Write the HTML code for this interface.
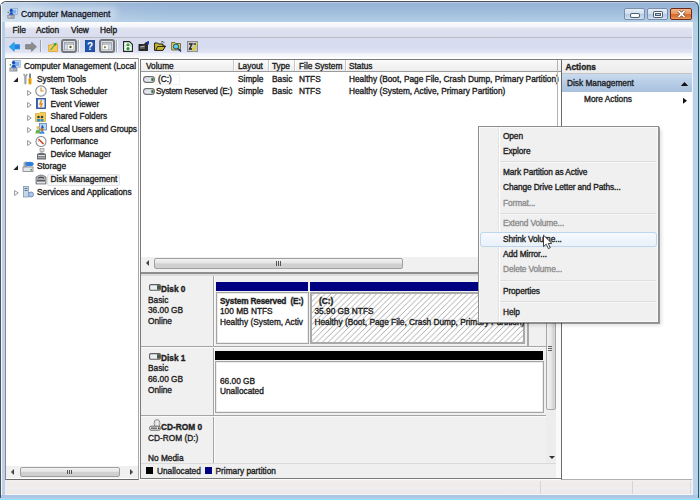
<!DOCTYPE html>
<html><head><meta charset="utf-8">
<style>
*{box-sizing:border-box;margin:0;padding:0}
html,body{width:700px;height:500px;overflow:hidden;background:#fff;font-family:"Liberation Sans",sans-serif;font-size:8.3px;color:#1e1e1e}
.a{position:absolute}
.t{position:absolute;white-space:nowrap;line-height:12px;-webkit-text-stroke:0.35px currentColor;letter-spacing:0}
#ctx .t{letter-spacing:-0.1px}
.b{font-weight:bold}
.g{color:#8d8d8d}
.ic{position:absolute;width:12px;height:12px}
</style></head><body>
<!-- window frame -->
<div class="a" style="left:0;top:1px;width:699px;height:499px;border:1px solid #4c5058;border-bottom:none;border-radius:6px 6px 0 0;background:linear-gradient(180deg,#94b2d6 0,#a2bedd 10px,#b4cfe6 21px,#bcd2ea 60px,#bcd2ea 100%)"></div>
<div class="a" style="left:1px;top:2px;width:697px;height:20px;border-radius:5px 5px 0 0;background:linear-gradient(90deg,rgba(255,255,255,0.45),rgba(255,255,255,0.12) 60px,rgba(255,255,255,0) 170px)"></div>
<div class="a" style="left:18px;top:6px;width:100px;height:14px;border-radius:7px;background:rgba(255,255,255,0.3);filter:blur(3px)"></div>
<div class="a" style="left:1px;top:4px;width:1px;height:494px;background:#f2f6fb"></div>
<div class="a" style="left:4px;top:2px;width:691px;height:1px;background:rgba(255,255,255,0.35)"></div>
<div class="a" style="left:1px;top:495px;width:697px;height:3px;background:#aac8e6"></div>
<div class="a" style="left:0;top:498px;width:699px;height:1px;background:#c6c8ee"></div>
<div class="a" style="left:699px;top:0;width:1px;height:500px;background:#8fe6f0"></div>
<div class="a" style="left:0;top:499px;width:700px;height:1px;background:#80e8f8"></div>

<!-- title -->
<svg class="a" style="left:7px;top:8px" width="11" height="11" viewBox="0 0 12 12"><rect x="4" y="0.6" width="7.2" height="6.6" fill="#d6e6f8" stroke="#8eaed2" stroke-width="0.9"/><rect x="5.2" y="1.8" width="4.8" height="4.2" fill="#7fb2ea"/><circle cx="4.6" cy="2.6" r="1.7" fill="#1a48b8"/><path d="M2.2 8.2 Q2.6 4.6 4.6 4.4 Q6.8 4.6 7.2 8.2 Z" fill="#2058c8"/><circle cx="1.4" cy="4.8" r="0.9" fill="#5a9a4a"/><rect x="0.4" y="7.4" width="8" height="4.2" rx="0.6" fill="#8a9098"/><rect x="1.4" y="8.4" width="3" height="2.2" fill="#c4c8ce"/><rect x="5" y="8.4" width="2.4" height="2.2" fill="#b0b4ba"/></svg>
<div class="t" style="left:21px;top:8px;font-size:8.5px;color:#141428;-webkit-text-stroke:0.3px #141428">Computer Management</div>
<!-- caption buttons -->
<div class="a" style="left:624px;top:8px;width:21px;height:12px;border:1px solid #7d8ea8;border-radius:2px;background:linear-gradient(#e6eef8,#d2e0f0 45%,#b4cbe5 50%,#c0d5ec 80%,#d6e6f6)"></div>
<div class="a" style="left:631px;top:14px;width:8px;height:3px;background:#fff;box-shadow:0 0 0 1px #4e5d72;border-radius:1px"></div>
<div class="a" style="left:647px;top:8px;width:21px;height:12px;border:1px solid #7d8ea8;border-radius:2px;background:linear-gradient(#e6eef8,#d2e0f0 45%,#b4cbe5 50%,#c0d5ec 80%,#d6e6f6)"></div>
<div class="a" style="left:654px;top:12px;width:8px;height:5px;border:1.5px solid #fff;box-shadow:0 0 0 1px #4e5d72,inset 0 0 0 1px #4e5d72;border-radius:1px"></div>
<div class="a" style="left:670px;top:8px;width:22px;height:12px;border:1px solid #6e2a18;border-radius:2px;background:linear-gradient(#f4b68a,#e99a60 45%,#d8682c 50%,#de7a3a 80%,#eea060)"></div>
<svg class="a" style="left:677px;top:10px" width="9" height="8" viewBox="0 0 9 8"><path d="M1.5 1 L7.5 7 M7.5 1 L1.5 7" stroke="#5a2a1a" stroke-width="3"/><path d="M1.5 1 L7.5 7 M7.5 1 L1.5 7" stroke="#fff" stroke-width="1.8"/></svg>
<!-- menu bar -->
<div class="a" style="left:5px;top:22px;width:687px;height:15px;background:linear-gradient(#fbfcfe,#f3f5fa 30%,#dee2f0 45%,#d9ddee)"></div>
<div class="a" style="left:5px;top:37px;width:687px;height:1px;background:#b6bec2"></div>
<div class="t" style="left:12.5px;top:23.5px">File</div>
<div class="t" style="left:36px;top:23.5px">Action</div>
<div class="t" style="left:71px;top:23.5px">View</div>
<div class="t" style="left:100px;top:23.5px">Help</div>

<!-- toolbar -->
<div class="a" style="left:5px;top:38px;width:687px;height:15px;background:linear-gradient(#d8dcee,#d6dcf0 60%,#e2e6f4)"></div>
<div class="a" style="left:5px;top:53px;width:687px;height:5px;background:linear-gradient(#eef1f8,#fafbfd)"></div>
<div id="tb">
<svg class="a" style="left:9px;top:42px" width="11" height="10" viewBox="0 0 11 10"><path d="M0.3 4.8 L5.2 0.3 L5.2 2.6 L10.7 2.6 L10.7 7 L5.2 7 L5.2 9.4 Z" fill="#2aa6ee" stroke="#1b86d6" stroke-width="0.6"/><rect x="6" y="3" width="4.5" height="3.6" fill="#2a7ee0"/></svg>
<svg class="a" style="left:25px;top:42px" width="12" height="10" viewBox="0 0 12 10"><path d="M11.5 4.8 L6.6 0.3 L6.6 2.6 L0.6 2.6 L0.6 7 L6.6 7 L6.6 9.4 Z" fill="#8c8c8c" stroke="#707070" stroke-width="0.6"/></svg>
<div class="a" style="left:40px;top:40px;width:1px;height:12px;background:#9a9ea6"></div><div class="a" style="left:41px;top:40px;width:1px;height:12px;background:#eef0f6"></div>
<div class="a" style="left:78px;top:40px;width:1px;height:12px;background:#a6abb5"></div><div class="a" style="left:79px;top:40px;width:1px;height:12px;background:#f4f6fa"></div>
<div class="a" style="left:116px;top:40px;width:1px;height:12px;background:#a6abb5"></div><div class="a" style="left:117px;top:40px;width:1px;height:12px;background:#f4f6fa"></div>
<svg class="a" style="left:48px;top:42px" width="10" height="10" viewBox="0 0 10 10"><path d="M0.5 3 L3.5 3 L4.5 2 L9.5 2 L9.5 9.5 L0.5 9.5 Z" fill="#f5c95a" stroke="#d9a23a" stroke-width="0.8"/><path d="M2 8 L6.5 2.5 L5 2 L8.5 0.5 L8 4 L7 3.3 L3 8.3 Z" fill="#3f9a3f"/></svg>
<div class="a" style="left:61px;top:39px;width:16px;height:14px;border:2px solid #75787e;border-radius:3px;background:linear-gradient(#e0e1e4,#d0d2d6)"></div>
<div class="a" style="left:99px;top:39px;width:16px;height:14px;border:2px solid #75787e;border-radius:3px;background:linear-gradient(#e0e1e4,#d0d2d6)"></div>
<svg class="a" style="left:64px;top:42px" width="10" height="8" viewBox="0 0 10 8"><rect x="0.5" y="0.5" width="9" height="7" fill="#bfc3c9" stroke="#9aa0a8" stroke-width="0.8"/><rect x="4" y="3" width="5.5" height="4.5" fill="#fbfbf3"/><circle cx="6.5" cy="5" r="1.2" fill="#5a5a2a"/><rect x="1" y="3" width="2" height="4.5" fill="#cfe0f4"/></svg>
<svg class="a" style="left:102px;top:42px" width="10" height="8" viewBox="0 0 10 8"><rect x="0.5" y="0.5" width="9" height="7" fill="#bfc3c9" stroke="#9aa0a8" stroke-width="0.8"/><rect x="0.5" y="3" width="5.5" height="4.5" fill="#fbfbf3"/><path d="M2.3 3.8 L4.3 5.2 L2.3 6.6 Z" fill="#5a5a2a"/><rect x="7" y="3" width="2" height="4.5" fill="#cfe0f4"/></svg>
<svg class="a" style="left:85px;top:40px" width="10" height="12" viewBox="0 0 10 12"><rect x="0.4" y="0.4" width="9.2" height="11.2" fill="#1f55b0" stroke="#163f8a" stroke-width="0.8"/><text x="5" y="9.6" font-family="Liberation Sans" font-weight="bold" font-size="10" fill="#fff" text-anchor="middle">?</text></svg>
<svg class="a" style="left:123px;top:41px" width="10" height="11" viewBox="0 0 10 11"><path d="M0.6 0.6 L6.5 0.6 L9.4 3.5 L9.4 10.4 L0.6 10.4 Z" fill="#fff" stroke="#222" stroke-width="1.1"/><circle cx="5" cy="3.7" r="1.5" fill="#1e9a2a"/><circle cx="5" cy="7.6" r="1.6" fill="#1e9a2a"/><path d="M2.6 5.6 A2.4 2.4 0 0 1 7.4 5.6" stroke="#6cc06c" stroke-width="0.7" fill="none"/></svg>
<svg class="a" style="left:138px;top:41px" width="11" height="11" viewBox="0 0 11 11"><path d="M0.5 3 L6 3 L8 1 L10 1 L10 10 L0.5 10 Z" fill="#2a2a2a"/><rect x="2" y="5" width="5" height="3" fill="#5a5a5a"/><path d="M2.5 6 L6.5 5" stroke="#ddd" stroke-width="0.8"/><rect x="9.3" y="0" width="1.7" height="3.5" fill="#1a3fd0"/></svg>
<svg class="a" style="left:154px;top:41px" width="12" height="10" viewBox="0 0 12 10"><path d="M0.6 2 L3.5 2 L4.5 3 L9 3 L9 5 L11.5 5 L9 9.4 L0.6 9.4 Z" fill="#c8b832" stroke="#1e1e10" stroke-width="1"/><path d="M2 9 L3.5 5.5 L11 5.5" stroke="#1e1e10" stroke-width="0.9" fill="none"/><path d="M7 1 L9 0.5 L10.5 2" stroke="#333" stroke-width="0.8" fill="none"/></svg>
<svg class="a" style="left:171px;top:41px" width="11" height="11" viewBox="0 0 11 11"><path d="M0.6 1.5 L4 1.5 L5 2.5 L9.5 2.5 L9.5 9 L0.6 9 Z" fill="#d6cf5a" stroke="#6a6a30" stroke-width="0.9"/><circle cx="5" cy="5.5" r="2.6" fill="#5ad2ea" stroke="#24406a" stroke-width="1"/><path d="M7 7.5 L10 10.5" stroke="#1a2a7a" stroke-width="1.4"/></svg>
<svg class="a" style="left:187px;top:41px" width="11" height="11" viewBox="0 0 11 11"><rect x="0.5" y="0.5" width="10" height="10" fill="#c8c8c8" stroke="#7c7c7c" stroke-width="0.8"/><path d="M2 3 L5 3 L2.5 8 L5 8" stroke="#222" stroke-width="1.3" fill="none"/><path d="M5.5 6.5 L7 9.5 L10 2" stroke="#d8d030" stroke-width="1.6" fill="none"/><path d="M6.5 3 L9 3" stroke="#222" stroke-width="1.2"/></svg>
</div>

<!-- panels -->
<div class="a" style="left:5px;top:57px;width:687px;height:423px;background:#fdfdfe"></div>
<div id="left" class="a" style="left:5px;top:58px;width:134px;height:422px;border:1px solid #8a8a8a;border-right-color:#a8a8a8;border-bottom-color:#6a6a6a;background:#fff;overflow:hidden">
<div class="a" style="left:0px;top:407px;width:132px;height:12px;background:#f0f0f0"></div>
<div class="a" style="left:5px;top:410px;width:0;height:0;border-top:3px solid transparent;border-bottom:3px solid transparent;border-right:3px solid #404040"></div>
<div class="a" style="left:14px;top:408px;width:100px;height:10px;border:1px solid #a0a0a0;border-radius:2px;background:linear-gradient(#f3f3f3,#e4e4e4 45%,#d0d0d0 55%,#cfcfcf)"></div>
<div class="a" style="left:61px;top:411px;width:5px;height:4px;background:repeating-linear-gradient(90deg,#555 0 1px,transparent 1px 2px)"></div>
<div class="a" style="left:124px;top:410px;width:0;height:0;border-top:3px solid transparent;border-bottom:3px solid transparent;border-left:3px solid #404040"></div>
<div class="t" style="left:18px;top:1px">Computer Management (Local</div>
<div class="t" style="left:31px;top:14px">System Tools</div>
<div class="t" style="left:44.5px;top:26px">Task Scheduler</div>
<div class="t" style="left:44.5px;top:39px">Event Viewer</div>
<div class="t" style="left:44.5px;top:51px">Shared Folders</div>
<div class="t" style="left:44.5px;top:64px;letter-spacing:-0.15px">Local Users and Groups</div>
<div class="t" style="left:44.5px;top:76px">Performance</div>
<div class="t" style="left:44.5px;top:89px">Device Manager</div>
<div class="t" style="left:31px;top:101px">Storage</div>
<div class="a" style="left:41px;top:115px;width:73px;height:12px;border:1px solid #e2e2e2;border-radius:2px;background:#f8f8f8"></div>
<div class="t" style="left:44.5px;top:114px">Disk Management</div>
<div class="t" style="left:31px;top:127px">Services and Applications</div>
</div>
<div id="treeicons">
<svg class="a" style="left:13px;top:77px" width="6" height="6" viewBox="0 0 6 6"><path d="M5 0.3 L5 5 L0.3 5 Z" fill="#222"/></svg>
<svg class="a" style="left:27px;top:90px" width="5" height="6" viewBox="0 0 5 6"><path d="M0.6 0.5 L4.2 3 L0.6 5.5 Z" fill="#fff" stroke="#8c8c8c" stroke-width="0.9"/></svg>
<svg class="a" style="left:27px;top:102px" width="5" height="6" viewBox="0 0 5 6"><path d="M0.6 0.5 L4.2 3 L0.6 5.5 Z" fill="#fff" stroke="#8c8c8c" stroke-width="0.9"/></svg>
<svg class="a" style="left:27px;top:115px" width="5" height="6" viewBox="0 0 5 6"><path d="M0.6 0.5 L4.2 3 L0.6 5.5 Z" fill="#fff" stroke="#8c8c8c" stroke-width="0.9"/></svg>
<svg class="a" style="left:27px;top:127px" width="5" height="6" viewBox="0 0 5 6"><path d="M0.6 0.5 L4.2 3 L0.6 5.5 Z" fill="#fff" stroke="#8c8c8c" stroke-width="0.9"/></svg>
<svg class="a" style="left:27px;top:140px" width="5" height="6" viewBox="0 0 5 6"><path d="M0.6 0.5 L4.2 3 L0.6 5.5 Z" fill="#fff" stroke="#8c8c8c" stroke-width="0.9"/></svg>
<svg class="a" style="left:13px;top:165px" width="6" height="6" viewBox="0 0 6 6"><path d="M5 0.3 L5 5 L0.3 5 Z" fill="#222"/></svg>
<svg class="a" style="left:14px;top:190px" width="5" height="6" viewBox="0 0 5 6"><path d="M0.6 0.5 L4.2 3 L0.6 5.5 Z" fill="#fff" stroke="#8c8c8c" stroke-width="0.9"/></svg>
<svg class="a" style="left:9px;top:60px" width="12" height="12" viewBox="0 0 12 12"><rect x="4" y="0.6" width="7.2" height="6.6" fill="#d6e6f8" stroke="#8eaed2" stroke-width="0.9"/><rect x="5.2" y="1.8" width="4.8" height="4.2" fill="#7fb2ea"/><circle cx="4.6" cy="2.6" r="1.7" fill="#1a48b8"/><path d="M2.2 8.2 Q2.6 4.6 4.6 4.4 Q6.8 4.6 7.2 8.2 Z" fill="#2058c8"/><circle cx="1.4" cy="4.8" r="0.9" fill="#5a9a4a"/><rect x="0.4" y="7.4" width="8" height="4.2" rx="0.6" fill="#8a9098"/><rect x="1.4" y="8.4" width="3" height="2.2" fill="#c4c8ce"/><rect x="5" y="8.4" width="2.4" height="2.2" fill="#b0b4ba"/></svg>
<svg class="a" style="left:23px;top:73px" width="10" height="12" viewBox="0 0 10 12"><path d="M1 0.8 Q0.4 2.5 1.6 3.6 L1.8 10.8 Q2.4 11.6 3 10.8 L3.2 3.6 Q4.4 2.5 3.8 0.8 L3.2 2.4 L1.6 2.4 Z" fill="#b4b9c0" stroke="#7d838b" stroke-width="0.6"/><rect x="6.3" y="0.6" width="1.4" height="4.6" fill="#4a5058"/><rect x="5.4" y="5" width="3.2" height="6.4" rx="0.8" fill="#f0b418"/><rect x="6.2" y="6" width="1.2" height="4.5" fill="#d08a10"/></svg>
<svg class="a" style="left:35px;top:85px" width="12" height="12" viewBox="0 0 12 12"><circle cx="6" cy="6" r="5.2" fill="#fdfdfd" stroke="#8a8f96" stroke-width="1.2"/><path d="M6 2.5 L6 6 L8.8 6" stroke="#e0901a" stroke-width="1.1" fill="none"/></svg>
<svg class="a" style="left:36px;top:98px" width="10" height="11" viewBox="0 0 10 11"><rect x="0.5" y="0.5" width="9" height="10" fill="#3d68b8" stroke="#24478a" stroke-width="0.8"/><rect x="2" y="1.5" width="6.5" height="8" fill="#e9eef8"/><path d="M5.5 2 L4 6 L6 6 L4.5 9.5" stroke="#e58a10" stroke-width="1.4" fill="none"/></svg>
<svg class="a" style="left:35px;top:112px" width="11" height="10" viewBox="0 0 11 10"><path d="M0.5 1.5 L4 1.5 L5 0.5 L10.5 0.5 L10.5 9.5 L0.5 9.5 Z" fill="#f4cc5c" stroke="#d8a83a" stroke-width="0.8"/><circle cx="3.5" cy="5" r="1.3" fill="#3a3a3a"/><circle cx="7" cy="5" r="1.3" fill="#3a3a3a"/><rect x="2" y="7" width="3" height="2.5" fill="#2f8fd0"/><rect x="5.5" y="7" width="3" height="2.5" fill="#2f8fd0"/></svg>
<svg class="a" style="left:35px;top:123px" width="12" height="11" viewBox="0 0 12 11"><rect x="4.5" y="0.5" width="7" height="6.5" fill="#b8d4f2" stroke="#5a82b8" stroke-width="0.8"/><path d="M6 6 L7 1.5 L9 5 Z" fill="#1b4ea8"/><circle cx="3" cy="4.5" r="1.6" fill="#e8c060"/><path d="M0.5 10.5 Q0.5 6.5 3 6.5 Q5.5 6.5 5.5 10.5 Z" fill="#6ab04c"/><circle cx="7" cy="6.5" r="1.6" fill="#c07020"/><path d="M4.5 10.8 Q5 8 7 8 Q9.5 8 9.5 10.8 Z" fill="#3a8ad8"/></svg>
<svg class="a" style="left:35px;top:136px" width="12" height="11" viewBox="0 0 12 11"><circle cx="6" cy="5.5" r="5" fill="#fff" stroke="#8a8f96" stroke-width="1.1"/><path d="M3.5 3 L8.5 8" stroke="#c83a1a" stroke-width="1.5"/><path d="M3.2 6 L4 3.5" stroke="#d8a070" stroke-width="0.8"/></svg>
<svg class="a" style="left:36px;top:148px" width="11" height="12" viewBox="0 0 11 12"><rect x="4" y="0.5" width="4" height="3" fill="#d8d8d8" stroke="#9a9a9a" stroke-width="0.7"/><path d="M1 6 Q5.5 3 10 6 L10 11.5 L1 11.5 Z" fill="#6a6d72"/><rect x="2" y="7" width="7" height="1.2" fill="#e0e0e0"/><rect x="2" y="9.2" width="7" height="1" fill="#b8b8b8"/></svg>
<svg class="a" style="left:22px;top:161px" width="12" height="11" viewBox="0 0 12 11"><path d="M1.5 2 Q1.5 0.5 4 0.5 L5 0.5 L5 6 L1.5 6 Z" fill="#a8abb0"/><ellipse cx="7.5" cy="3" rx="4.2" ry="2.3" fill="#2f7fd8"/><rect x="1" y="6" width="10" height="4.5" fill="#e4e6ea" stroke="#7d8087" stroke-width="0.8"/><rect x="8.5" y="8" width="1.5" height="1.5" fill="#3a9a3a"/></svg>
<svg class="a" style="left:35px;top:173px" width="12" height="12" viewBox="0 0 12 12"><path d="M1 4 Q6 0 11 4 L11 11 L1 11 Z" fill="#a9acb1" stroke="#6e7177" stroke-width="0.8"/><path d="M3 5 Q6 3.5 9 5" stroke="#3a3a3a" stroke-width="1" fill="none"/><rect x="2" y="7" width="8" height="1.2" fill="#5a5d62"/><rect x="2" y="9" width="8" height="1.2" fill="#e4e4e4"/></svg>
<svg class="a" style="left:23px;top:186px" width="11" height="12" viewBox="0 0 11 12"><rect x="0.5" y="0.5" width="5" height="10.5" fill="#c7d7e8" stroke="#8098b4" stroke-width="0.8"/><rect x="1.5" y="2" width="3" height="1" fill="#60788f"/><rect x="1.5" y="4" width="3" height="1" fill="#60788f"/><circle cx="8" cy="8.5" r="2.5" fill="#a9c8ec" stroke="#6c8cb8" stroke-width="0.9"/></svg>
</div>
<div id="mid" class="a" style="left:140px;top:59px;width:421px;height:420px;border:1px solid #7a7a7a;border-right:none;background:#fff;overflow:hidden">
<div class="a" style="left:0px;top:0px;width:420px;height:12px;background:linear-gradient(#fbfbfb,#f3f3f3 50%,#ececec)"></div>
<div class="a" style="left:0px;top:11px;width:420px;height:1px;background:#9a9a9a"></div>
<div class="a" style="left:92px;top:0px;width:1px;height:11px;background:#c9c9c9"></div>
<div class="a" style="left:93px;top:0px;width:1px;height:11px;background:#fff"></div>
<div class="a" style="left:127px;top:0px;width:1px;height:11px;background:#c9c9c9"></div>
<div class="a" style="left:128px;top:0px;width:1px;height:11px;background:#fff"></div>
<div class="a" style="left:153px;top:0px;width:1px;height:11px;background:#c9c9c9"></div>
<div class="a" style="left:154px;top:0px;width:1px;height:11px;background:#fff"></div>
<div class="a" style="left:204px;top:0px;width:1px;height:11px;background:#c9c9c9"></div>
<div class="a" style="left:205px;top:0px;width:1px;height:11px;background:#fff"></div>
<div class="t " style="left:5px;top:0px;">Volume</div>
<div class="t " style="left:97px;top:0px;">Layout</div>
<div class="t " style="left:131px;top:0px;">Type</div>
<div class="t " style="left:158px;top:0px;">File System</div>
<div class="t " style="left:208px;top:0px;">Status</div>
<svg class="a" style="left:2px;top:16px" width="12" height="7" viewBox="0 0 12 7"><rect x="0.6" y="0.6" width="10.8" height="5.8" rx="2.6" fill="#eceef4" stroke="#6e6e6e" stroke-width="1.1"/><rect x="2" y="2" width="6" height="2.5" fill="#dfe2ee"/><rect x="8.3" y="2.2" width="2.2" height="2.6" fill="#2c6a2c"/></svg>
<div class="a" style="left:14px;top:14px;width:25px;height:11px;border:1px solid #f2f2f2"></div>
<div class="t " style="left:17px;top:13px;">(C:)</div>
<svg class="a" style="left:2px;top:28px" width="12" height="7" viewBox="0 0 12 7"><rect x="0.6" y="0.6" width="10.8" height="5.8" rx="2.6" fill="#eceef4" stroke="#6e6e6e" stroke-width="1.1"/><rect x="2" y="2" width="6" height="2.5" fill="#dfe2ee"/><rect x="8.3" y="2.2" width="2.2" height="2.6" fill="#2c6a2c"/></svg>
<div class="t " style="left:15px;top:25px;letter-spacing:-0.25px">System Reserved (E:)</div>
<div class="t " style="left:97px;top:13px;">Simple</div>
<div class="t " style="left:131px;top:13px;">Basic</div>
<div class="t " style="left:158px;top:13px;">NTFS</div>
<div class="t " style="left:208px;top:13px;">Healthy (Boot, Page File, Crash Dump, Primary Partition)</div>
<div class="t " style="left:97px;top:25px;">Simple</div>
<div class="t " style="left:131px;top:25px;">Basic</div>
<div class="t " style="left:158px;top:25px;">NTFS</div>
<div class="t " style="left:208px;top:25px;">Healthy (System, Active, Primary Partition)</div>
<div class="a" style="left:0px;top:197px;width:420px;height:15px;background:#f0f0f0"></div>
<div class="a" style="left:5px;top:200px;width:0px;height:0px;border-top:3px solid transparent;border-bottom:3px solid transparent;border-right:3px solid #404040"></div>
<div class="a" style="left:13px;top:198px;width:249px;height:11px;border:1px solid #a0a0a0;border-radius:2px;background:linear-gradient(#f3f3f3,#e4e4e4 45%,#d0d0d0 55%,#cfcfcf)"></div>
<div class="a" style="left:135px;top:201px;width:5px;height:5px;background:repeating-linear-gradient(90deg,#555 0 1px,transparent 1px 2px)"></div>
<div class="a" style="left:0px;top:212px;width:420px;height:2px;background:#8e8e8e"></div>
<div class="a" style="left:0px;top:214px;width:420px;height:2px;background:#dcdcdc"></div>
<div class="a" style="left:0px;top:216px;width:420px;height:203px;background:#f0f0f0"></div>
<div class="a" style="left:72px;top:216px;width:1px;height:187px;background:#a5a5a5"></div>
<div class="a" style="left:73px;top:216px;width:1px;height:187px;background:#fafafa"></div>
<div class="a" style="left:0px;top:286px;width:405px;height:1px;background:#a5a5a5"></div>
<div class="a" style="left:0px;top:287px;width:405px;height:1px;background:#fafafa"></div>
<div class="a" style="left:0px;top:355px;width:405px;height:1px;background:#a5a5a5"></div>
<div class="a" style="left:0px;top:356px;width:405px;height:1px;background:#fafafa"></div>
<svg class="a" style="left:8px;top:224px" width="12" height="7" viewBox="0 0 12 7"><rect x="0.6" y="0.6" width="10.8" height="5.6" rx="1.2" fill="#eceef4" stroke="#5e5e5e" stroke-width="1.1"/><rect x="8" y="1.2" width="3" height="4.5" fill="#4a5a4a"/></svg>
<div class="t b" style="left:20px;top:223px;">Disk 0</div>
<div class="t " style="left:7px;top:234px;">Basic</div>
<div class="t " style="left:7px;top:244px;">36.00 GB</div>
<div class="t " style="left:7px;top:255px;">Online</div>
<div class="a" style="left:75px;top:222px;width:92px;height:9px;background:#000080"></div>
<div class="a" style="left:169px;top:222px;width:218px;height:9px;background:#000080"></div>
<div class="a" style="left:75px;top:232px;width:93px;height:52px;border:1px solid #a4a4a4;background:#fff;box-shadow:inset 0 0 0 1px #ececec"></div>
<div class="t b" style="left:79px;top:235px;letter-spacing:-0.2px">System Reserved&nbsp; (E:)</div>
<div class="t " style="left:79px;top:245px;">100 MB NTFS</div>
<div class="t " style="left:79px;top:256px;">Healthy (System, Activ</div>
<div class="a" style="left:386px;top:222px;width:2px;height:65px;background:#a9a9a9"></div><svg class="a" style="left:169px;top:232px" width="215" height="52" viewBox="0 0 215 52"><defs><pattern id="h" patternUnits="userSpaceOnUse" width="5.7" height="5.7"><path d="M0 5.7 L5.7 0 M-1 1 L1 -1 M4.7 6.7 L6.7 4.7" stroke="#a6a6a6" stroke-width="0.95"/></pattern></defs><rect x="0" y="0" width="215" height="52" fill="#fff"/><rect x="0" y="0" width="215" height="52" fill="url(#h)"/><rect x="1" y="1" width="213" height="50" fill="none" stroke="#a9a9a9" stroke-width="2"/></svg>
<div class="t b" style="left:178px;top:235px;">(C:)</div>
<div class="t " style="left:173.5px;top:245px;">35.90 GB NTFS</div>
<div class="t " style="left:173.5px;top:256px;">Healthy (Boot, Page File, Crash Dump, Primary Partition)</div>
<svg class="a" style="left:8px;top:293px" width="12" height="7" viewBox="0 0 12 7"><rect x="0.6" y="0.6" width="10.8" height="5.6" rx="1.2" fill="#eceef4" stroke="#5e5e5e" stroke-width="1.1"/><rect x="8" y="1.2" width="3" height="4.5" fill="#4a5a4a"/></svg>
<div class="t b" style="left:20px;top:292px;">Disk 1</div>
<div class="t " style="left:7px;top:302px;">Basic</div>
<div class="t " style="left:7px;top:313px;">66.00 GB</div>
<div class="t " style="left:7px;top:324px;">Online</div>
<div class="a" style="left:74px;top:291px;width:328px;height:9px;background:#000"></div>
<div class="a" style="left:74px;top:301px;width:329px;height:52px;border:1px solid #a4a4a4;background:#fff;box-shadow:inset 0 0 0 1px #ececec"></div>
<div class="t " style="left:79px;top:315px;">66.00 GB</div>
<div class="t " style="left:79px;top:325px;">Unallocated</div>
<svg class="a" style="left:8px;top:359px" width="12" height="12" viewBox="0 0 12 12"><ellipse cx="8" cy="4.5" rx="3" ry="4" fill="#dcdcdc" stroke="#8a8a8a" stroke-width="0.9"/><rect x="7.6" y="2" width="1" height="4" fill="#fff"/><rect x="0.6" y="7.2" width="10.8" height="4" rx="1.5" fill="#e6e6e6" stroke="#6a6a6a" stroke-width="1"/><rect x="2" y="8.6" width="6" height="1.2" fill="#555"/><rect x="9" y="8.5" width="1.5" height="1.5" fill="#333"/></svg>
<div class="t b" style="left:20px;top:361px;">CD-ROM 0</div>
<div class="t " style="left:7px;top:372px;">CD-ROM (D:)</div>
<div class="t " style="left:7px;top:392px;">No Media</div>
<div class="a" style="left:0px;top:403px;width:416px;height:1px;background:#dadada"></div>
<div class="a" style="left:0px;top:404px;width:416px;height:14px;background:#efefef;border-right:1px solid #c8c8c8"></div>
<div class="a" style="left:5px;top:407px;width:7px;height:7px;background:#000"></div>
<div class="t " style="left:16px;top:405px;">Unallocated</div>
<div class="a" style="left:64px;top:407px;width:7px;height:7px;background:#000080"></div>
<div class="t " style="left:74.5px;top:405px;">Primary partition</div>
<div class="a" style="left:405px;top:216px;width:11px;height:187px;background:#ededed"></div>
<div class="a" style="left:405px;top:216px;width:10px;height:134px;border:1px solid #a6a6a6;border-radius:2px;background:linear-gradient(90deg,#f2f2f2,#e8e8e8 50%,#d2d2d2 80%,#d8d8d8)"></div>
<div class="a" style="left:407px;top:286px;width:4px;height:5px;background:repeating-linear-gradient(180deg,#606060 0 1px,transparent 1px 2px)"></div>
<div class="a" style="left:408px;top:396px;width:0px;height:0px;border-left:3px solid transparent;border-right:3px solid transparent;border-top:3px solid #303030"></div>
<div class="a" style="left:416px;top:0px;width:1px;height:216px;background:#b4b4b4"></div><div class="a" style="left:415px;top:216px;width:5px;height:203px;background:#fafafa"></div>
</div>
<div id="right" class="a" style="left:561px;top:59px;width:131px;height:421px;border-left:1px solid #6a6a6a;border-top:1px solid #8a8a8a;border-bottom:1px solid #b0b0b0;background:#fff;overflow:hidden">
<div class="a" style="left:0px;top:0px;width:131px;height:13px;background:linear-gradient(#f4f4f4,#ececec)"></div>
<div class="a" style="left:0px;top:13px;width:131px;height:1px;background:#c4c4c4"></div>
<div class="t b" style="left:3.5px;top:1px;">Actions</div>
<div class="a" style="left:0px;top:14px;width:131px;height:18px;background:linear-gradient(#c9daee,#b3cae5 60%,#a9c1de)"></div>
<div class="t " style="left:5px;top:17px;">Disk Management</div>
<svg class="a" style="left:118px;top:21px" width="9" height="6" viewBox="0 0 9 6"><path d="M0.8 5 L4.5 1 L8.2 5 Z" fill="#111"/></svg>
<div class="t " style="left:22px;top:33px;">More Actions</div>
<svg class="a" style="left:120px;top:37px" width="6" height="8" viewBox="0 0 6 8"><path d="M1 0.8 L5 3.8 L1 6.8 Z" fill="#111"/></svg>
</div>

<!-- status bar -->
<div class="a" style="left:5px;top:480px;width:687px;height:14px;background:linear-gradient(#f1eeee,#efebea 40%,#eeedf0 60%,#efe9e6)"></div><div class="a" style="left:5px;top:494px;width:687px;height:1px;background:#f4f6fa"></div>
<div class="a" style="left:540px;top:481px;width:1px;height:13px;background:#d8d4d4"></div>
<div class="a" style="left:632px;top:481px;width:1px;height:13px;background:#d8d4d4"></div>
<div class="a" style="left:690px;top:481px;width:1px;height:13px;background:#dcd8d8"></div>

<div class="a" style="left:692px;top:22px;width:1px;height:473px;background:#eef3fa"></div>
<div id="ctx">
<div class="a" style="left:481px;top:129px;width:181px;height:197px;background:rgba(0,0,0,0.10);border-radius:3px;filter:blur(1.5px)"></div>
<div class="a" style="left:478px;top:126px;width:181px;height:197px;border:1px solid #8e8e8e;background:#f0f0f0;box-shadow:inset 0 0 0 1px #fafafa,1px 1px 0 rgba(0,0,0,0.35)"></div>
<div class="a" style="left:498px;top:127px;width:1px;height:195px;background:#e2e3e3"></div>
<div class="a" style="left:499px;top:127px;width:1px;height:195px;background:#fff"></div>
<div class="a" style="left:500px;top:161px;width:156px;height:1px;background:#dedede"></div>
<div class="a" style="left:500px;top:162px;width:156px;height:1px;background:#f7f7f7"></div>
<div class="a" style="left:500px;top:213px;width:156px;height:1px;background:#dedede"></div>
<div class="a" style="left:500px;top:214px;width:156px;height:1px;background:#f7f7f7"></div>
<div class="a" style="left:500px;top:280px;width:156px;height:1px;background:#dedede"></div>
<div class="a" style="left:500px;top:281px;width:156px;height:1px;background:#f7f7f7"></div>
<div class="a" style="left:500px;top:301px;width:156px;height:1px;background:#dedede"></div>
<div class="a" style="left:500px;top:302px;width:156px;height:1px;background:#f7f7f7"></div>
<div class="a" style="left:480px;top:232px;width:177px;height:15px;border:1px solid #bcd6ee;border-radius:3px;background:linear-gradient(#f6f9fd,#e9f1fb)"></div>
<div class="t " style="left:503px;top:130px;">Open</div>
<div class="t " style="left:503px;top:145px;">Explore</div>
<div class="t " style="left:503px;top:166px;">Mark Partition as Active</div>
<div class="t " style="left:503px;top:181px;">Change Drive Letter and Paths...</div>
<div class="t g" style="left:503px;top:197px;">Format...</div>
<div class="t g" style="left:503px;top:217px;">Extend Volume...</div>
<div class="t " style="left:503px;top:233px;">Shrink Volume...</div>
<div class="t " style="left:503px;top:248px;">Add Mirror...</div>
<div class="t g" style="left:503px;top:263px;">Delete Volume...</div>
<div class="t " style="left:503px;top:285px;">Properties</div>
<div class="t " style="left:503px;top:306px;">Help</div>
<svg class="a" style="left:542px;top:234px" width="13" height="16" viewBox="0 0 13 16"><path d="M1.5 1.2 V12.6 L4.2 10.2 L6.4 14.6 L8.3 13.7 L6.2 9.4 L9.9 9.4 Z" fill="#fff" stroke="#2a2a2a" stroke-width="0.9" stroke-linejoin="round"/></svg>
</div>
</body></html>
